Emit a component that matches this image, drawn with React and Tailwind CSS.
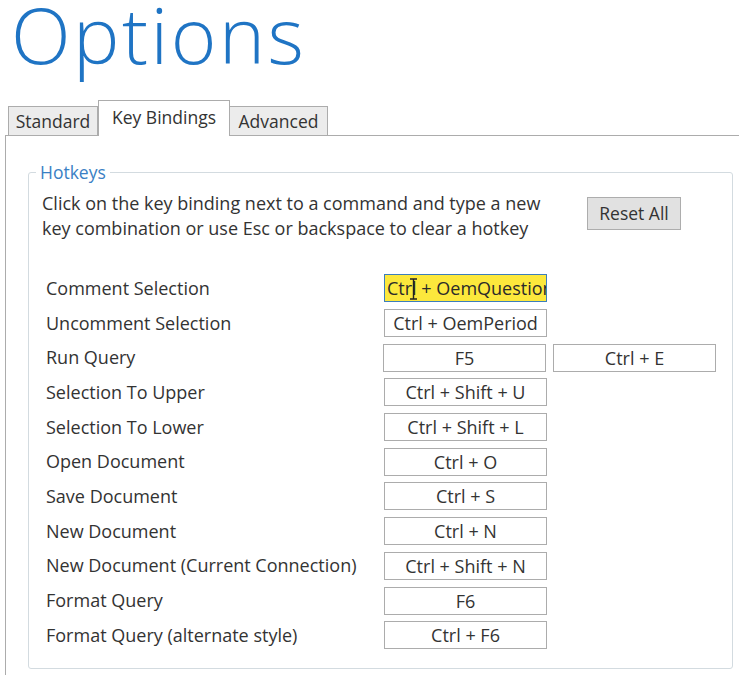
import React from "react";

const bindings = [
  { name: "Comment Selection", keys: ["Ctrl + OemQuestion"], active: true },
  { name: "Uncomment Selection", keys: ["Ctrl + OemPeriod"] },
  { name: "Run Query", keys: ["F5", "Ctrl + E"] },
  { name: "Selection To Upper", keys: ["Ctrl + Shift + U"] },
  { name: "Selection To Lower", keys: ["Ctrl + Shift + L"] },
  { name: "Open Document", keys: ["Ctrl + O"] },
  { name: "Save Document", keys: ["Ctrl + S"] },
  { name: "New Document", keys: ["Ctrl + N"] },
  { name: "New Document (Current Connection)", keys: ["Ctrl + Shift + N"] },
  { name: "Format Query", keys: ["F6"] },
  { name: "Format Query (alternate style)", keys: ["Ctrl + F6"] },
];

function IBeam() {
  return (
    <svg
      className="absolute left-[24px] top-[3px]"
      width="9"
      height="22"
      viewBox="0 0 9 22"
    >
      <path d="M1 1h7M1 21h7M4.5 1v20" stroke="#222" strokeWidth="1.4" fill="none" />
    </svg>
  );
}

function KeyBox({ text, active }) {
  if (active) {
    return (
      <div className="relative w-[163px] h-[28px] border border-[#3d7ebb] bg-[#fce83c] overflow-hidden whitespace-nowrap pl-[2px] leading-[26px] text-[#2a2a2a]">
        {text}
        <IBeam />
      </div>
    );
  }
  return (
    <div className="w-[163px] h-[28px] border border-[#acacac] bg-white text-center leading-[26px] whitespace-nowrap overflow-hidden text-[#333]">
      {text}
    </div>
  );
}

export default function App() {
  return (
    <div
      className="w-[739px] h-[675px] bg-white overflow-hidden text-[#333]"
      style={{ fontFamily: '"Open Sans", "Noto Sans", sans-serif' }}
    >
      <h1 className="pl-[11px] h-[100px] text-[78px] font-light leading-[69px] text-[#1f74c4] tracking-[2.5px]">
        Options
      </h1>

      {/* tab strip */}
      <div className="flex items-end pl-[8px] h-[35px] text-[17.5px] relative z-10">
        <div className="h-[29px] w-[90px] border border-[#acacac] border-b-0 bg-[#ececec] flex items-center justify-center text-[#333]">
          Standard
        </div>
        <div className="h-[36px] w-[132px] -mb-px border border-[#acacac] border-b-0 bg-white flex items-start justify-center pt-[3px] text-[#333]">
          Key Bindings
        </div>
        <div className="h-[29px] w-[98px] border border-[#acacac] border-b-0 border-l-0 bg-[#ececec] flex items-center justify-center text-[#333]">
          Advanced
        </div>
      </div>

      {/* tab page */}
      <div className="ml-[5px] border-l border-t border-[#acacac] h-[600px] pl-[22px] pt-[36px] pr-[6px]">
        <div className="relative border border-[#d3dbe0] rounded-[3px] h-[497px] pl-[13px] pr-[16px] pt-[18px]">
          <span className="absolute left-[7px] -top-[11px] bg-white px-[4px] text-[17.5px] leading-[20px] text-[#3a80c4]">
            Hotkeys
          </span>

          <div className="flex items-start text-[18px] leading-[25px] text-[#333]">
            <p className="w-[540px] whitespace-nowrap">
              Click on the key binding next to a command and type a new
              <br />
              key combination or use Esc or backspace to clear a hotkey
            </p>
            <button className="ml-[5px] mt-[6px] w-[94px] h-[33px] border border-[#adadad] bg-[#e1e1e1] text-[17.5px] text-[#333]">
              Reset All
            </button>
          </div>

          <div className="mt-[30px] text-[18px]">
            {bindings.map((b) => (
              <div key={b.name} className="flex items-center h-[34.7px]">
                <div className="w-[342px] pl-[4px] whitespace-nowrap text-[#333]">
                  {b.name}
                </div>
                <div className="flex gap-[7px]">
                  {b.keys.map((k) => (
                    <KeyBox key={k} text={k} active={b.active} />
                  ))}
                </div>
              </div>
            ))}
          </div>
        </div>
      </div>
    </div>
  );
}
